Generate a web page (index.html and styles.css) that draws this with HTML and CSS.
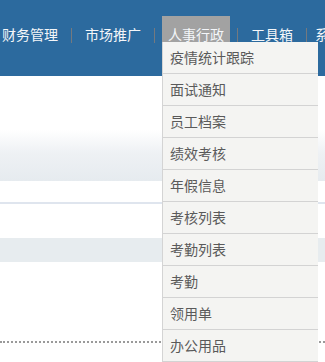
FILE: index.html
```html
<!DOCTYPE html>
<html lang="zh">
<head>
<meta charset="utf-8">
<link rel="stylesheet" href="styles.css">
</head>
<body>
<header class="topbar">
  <ul class="nav">
    <li class="nav-item"><a class="nav-link">财务管理</a></li>
    <li class="sep"></li>
    <li class="nav-item"><a class="nav-link">市场推广</a></li>
    <li class="sep"></li>
    <li class="nav-item active"><a class="nav-link">人事行政</a></li>
    <li class="sep"></li>
    <li class="nav-item"><a class="nav-link">工具箱</a></li>
    <li class="sep"></li>
    <li class="nav-item last"><a class="nav-link">系统设置</a></li>
  </ul>
  <ul class="dropdown">
    <li class="dd-item">疫情统计跟踪</li>
    <li class="dd-item">面试通知</li>
    <li class="dd-item">员工档案</li>
    <li class="dd-item">绩效考核</li>
    <li class="dd-item">年假信息</li>
    <li class="dd-item">考核列表</li>
    <li class="dd-item">考勤列表</li>
    <li class="dd-item">考勤</li>
    <li class="dd-item">领用单</li>
    <li class="dd-item">办公用品</li>
  </ul>
</header>
<main class="content">
  <div class="blank-a"></div>
  <div class="gradient"></div>
  <div class="blank-b"></div>
  <div class="rule"></div>
  <div class="blank-c"></div>
  <div class="band"></div>
  <div class="blank-d"></div>
  <div class="dotted"></div>
  <div class="blank-e"></div>
</main>
</body>
</html>
```
FILE: styles.css
```css
* { box-sizing: border-box; }
html, body {
  margin: 0;
  padding: 0;
  background: #ffffff;
  overflow: hidden;
  font-family: "Noto Sans CJK SC", "Noto Sans", sans-serif;
}
body { height: 362px; }
.topbar {
  position: relative;
  height: 76px;
  background: #2c6a9e;
  z-index: 2;
}
.nav {
  list-style: none;
  margin: 0;
  padding: 16px 0 0 0;
  display: flex;
  align-items: flex-start;
  margin-left: -11px;
  white-space: nowrap;
}
.nav-item {
  margin: 0 7px;
}
.nav-item.last {
  margin-left: 2px;
}
.nav-link {
  display: block;
  padding: 0 6px;
  height: 36px;
  line-height: 36px;
  font-size: 14px;
  color: #f4f6f9;
}
.nav-item.active .nav-link {
  background: #a2a2a2;
}
.sep {
  flex: none;
  width: 1px;
  height: 15px;
  margin-top: 12px;
  background: #74797f;
}
.dropdown {
  position: absolute;
  left: 162px;
  top: 42px;
  width: 156px;
  margin: 0;
  padding: 0;
  list-style: none;
  background: #f4f4f2;
  border-left: 1px solid #d4d4d4;
  z-index: 5;
}
.dd-item {
  height: 32px;
  line-height: 31px;
  padding-left: 7px;
  font-size: 14px;
  color: #5a5a5a;
  border-bottom: 1px solid #d3d3d3;
}
.content {
  display: flex;
  flex-direction: column;
}
.blank-a { height: 54px; }
.gradient {
  height: 51px;
  background: linear-gradient(to bottom, #ffffff 0%, #eef1f4 45%, #e6ebef 100%);
}
.blank-b { height: 21px; }
.rule { height: 2px; background: #dfe5ee; }
.blank-c { height: 34px; }
.band { height: 24px; background: #e7ecef; }
.blank-d { height: 79px; }
.dotted {
  height: 0;
  border-top: 2px dotted #9a9a9a;
}
.blank-e { height: 19px; }
```
